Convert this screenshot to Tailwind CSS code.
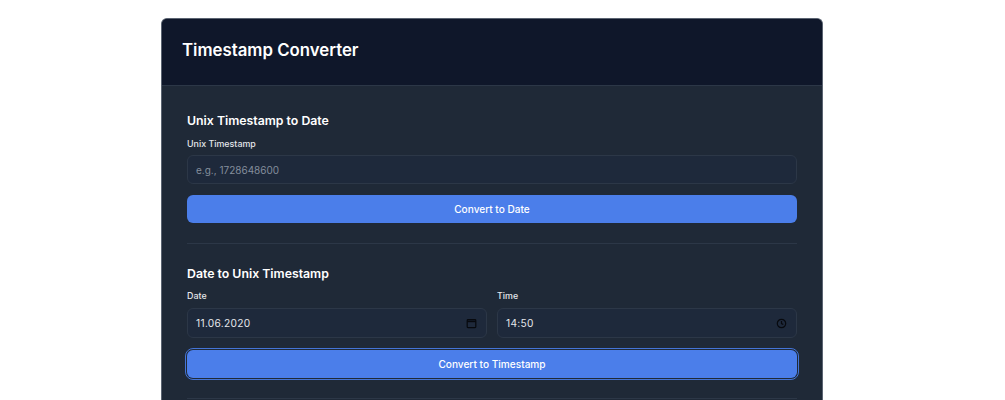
<!DOCTYPE html>
<html lang="en">
<head>
  <meta charset="UTF-8">
  <title>Timestamp Converter</title>
  <script src="https://cdn.jsdelivr.net/npm/@tailwindcss/browser@4"></script>
</head>
<body class="h-screen overflow-hidden bg-white font-['Inter',sans-serif]">
  <div class="w-[984px] pt-[18px]">
    <div class="mx-auto w-[662px] h-[382px] rounded-t-md border border-b-0 border-[#5b6472] bg-[#1f2937] overflow-hidden">
      <!-- Header -->
      <div class="h-[67px] flex items-center pb-[3px] px-[20px] bg-[#0f172a] border-b border-[#2c3747]">
        <h1 class="text-[16.8px] font-semibold text-white">Timestamp Converter</h1>
      </div>

      <div class="px-[25px]">
        <!-- Unix to date -->
        <section class="pt-[26px] pb-[20px] border-b border-[#2c3747]">
          <h2 class="text-[12.3px] leading-[18px] font-semibold text-white">Unix Timestamp to Date</h2>
          <label class="block mt-[7px] text-[8.9px] leading-[14px] font-medium text-[#e5e7eb]">Unix Timestamp</label>
          <div class="mt-[4px] h-[29px] flex items-center pt-[1px] px-[8px] rounded-md border border-[#2c3747] bg-[#1e293b] text-[10px] text-[#848e9c]">e.g., 1728648600</div>
          <button class="mt-[11px] w-full h-[28px] pt-[1px] rounded-md bg-[#4b7eea] text-white text-[10.1px] font-medium">Convert to Date</button>
        </section>

        <!-- Date to unix -->
        <section class="pt-[21px] pb-[20px] border-b border-[#2c3747]">
          <h2 class="text-[12.3px] leading-[18px] font-semibold text-white">Date to Unix Timestamp</h2>
          <div class="mt-[6px] grid grid-cols-2 gap-[10px]">
            <div>
              <label class="block text-[8.9px] leading-[14px] font-medium text-[#e5e7eb]">Date</label>
              <div class="mt-[5px] h-[30px] flex items-center justify-between pt-[1px] px-[8px] rounded-md border border-[#2c3747] bg-[#1e293b] text-[10.2px] text-[#e5e7eb]">
                <span class="tracking-[0.3px]">11.06.2020</span>
                <svg class="w-[11px] h-[11px] mr-[1px] mb-[1px]" viewBox="0 0 11 11" fill="none" stroke="#07090e" stroke-width="1.2"><rect x="1.2" y="1.6" width="8.6" height="8" rx="0.8"/><path d="M1.2 3.4h8.6" stroke-width="1.6"/></svg>
              </div>
            </div>
            <div>
              <label class="block text-[8.9px] leading-[14px] font-medium text-[#e5e7eb]">Time</label>
              <div class="mt-[5px] h-[30px] flex items-center justify-between pt-[1px] px-[8px] rounded-md border border-[#2c3747] bg-[#1e293b] text-[10.2px] text-[#e5e7eb]">
                <span class="tracking-[0.3px]">14:50</span>
                <svg class="w-[11px] h-[11px] mr-[1px] mb-[1px]" viewBox="0 0 11 11" fill="none" stroke="#07090e" stroke-width="1.2"><circle cx="5.5" cy="5.5" r="4.2"/><path d="M5.5 3v2.6l1.8 1"/></svg>
              </div>
            </div>
          </div>
          <button class="mt-[12px] w-full h-[28px] pt-[1px] rounded-md bg-[#4b7eea] text-white text-[10.1px] font-medium outline-[1.5px] outline-offset-[1px] outline-[#4474d6]">Convert to Timestamp</button>
        </section>
      </div>
    </div>
  </div>
</body>
</html>
